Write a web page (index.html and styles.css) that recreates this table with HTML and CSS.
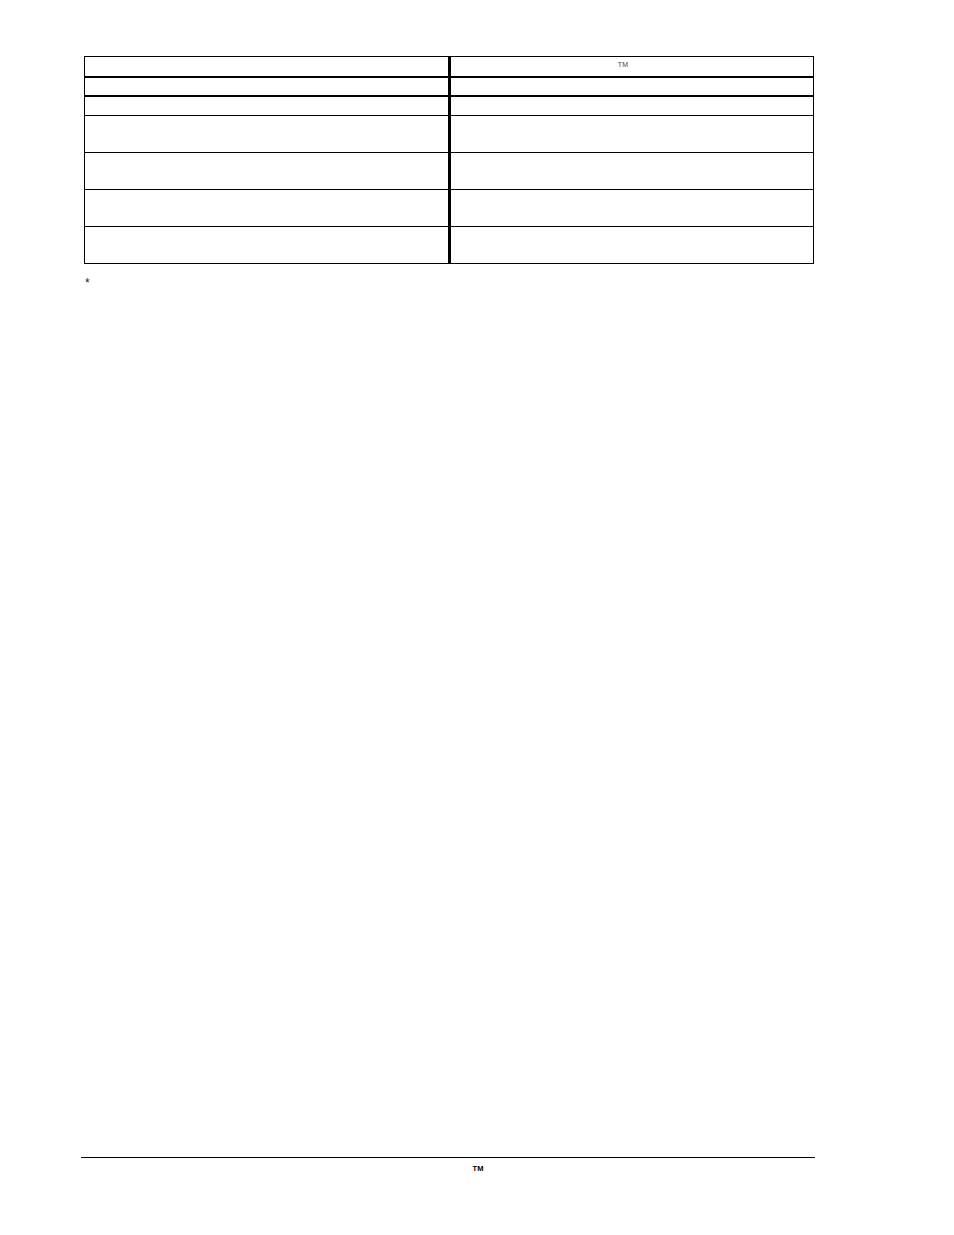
FILE: index.html
```html
<!DOCTYPE html>
<html lang="en">
<head>
<meta charset="utf-8">
<title>Table page</title>
<link rel="stylesheet" href="styles.css">
</head>
<body>
<div class="page">
  <div class="grid">
    <div class="row r1">
      <div class="cell left"></div>
      <div class="cell right"><span class="tm-head">TM</span></div>
    </div>
    <div class="row r2">
      <div class="cell left"></div>
      <div class="cell right"></div>
    </div>
    <div class="row r3">
      <div class="cell left"></div>
      <div class="cell right"></div>
    </div>
    <div class="row tall">
      <div class="cell left"></div>
      <div class="cell right"></div>
    </div>
    <div class="row tall">
      <div class="cell left"></div>
      <div class="cell right"></div>
    </div>
    <div class="row tall">
      <div class="cell left"></div>
      <div class="cell right"></div>
    </div>
    <div class="row tall last">
      <div class="cell left"></div>
      <div class="cell right"></div>
    </div>
  </div>
  <div class="note">*</div>
  <div class="footer">
    <div class="rule"></div>
    <div class="foot-text"><span class="tm-foot">TM</span></div>
  </div>
</div>
</body>
</html>
```
FILE: styles.css
```css
html, body {
  margin: 0;
  padding: 0;
  background: #fff;
}
body {
  font-family: "Liberation Sans", Arial, sans-serif;
  color: #000;
}
.page {
  width: 954px;
  height: 1235px;
  display: flex;
  flex-direction: column;
}
.grid {
  margin: 56px 0 0 84px;
  width: 730px;
  box-sizing: border-box;
  border: 1px solid #000;
  display: flex;
  flex-direction: column;
}
.row {
  display: flex;
  border-bottom: 1px solid #000;
}
.row.last {
  border-bottom: none;
}
.r1 {
  height: 19px;
  border-bottom-width: 2px;
}
.r2 {
  height: 17px;
  border-bottom-width: 2px;
}
.r3 {
  height: 18px;
}
.tall {
  height: 36px;
}
.cell.left {
  width: 363px;
  border-right: 3px solid #000;
}
.cell.right {
  flex: 1;
  display: flex;
  justify-content: center;
  align-items: center;
  padding-right: 18px;
}
.tm-head {
  font-size: 7px;
  color: #444;
  letter-spacing: 0.3px;
  margin-top: -4px;
}
.note {
  margin: 13px 0 0 85px;
  font-size: 12px;
  line-height: 12px;
  color: #222;
}
.footer {
  margin-top: auto;
  margin-bottom: 62px;
  padding-left: 81px;
}
.rule {
  width: 734px;
  height: 1px;
  background: #000;
}
.foot-text {
  width: 734px;
  display: flex;
  justify-content: center;
  padding-top: 6px;
  padding-left: 60px;
  box-sizing: border-box;
}
.tm-foot {
  font-size: 7.5px;
  font-weight: bold;
  line-height: 9px;
}
```
